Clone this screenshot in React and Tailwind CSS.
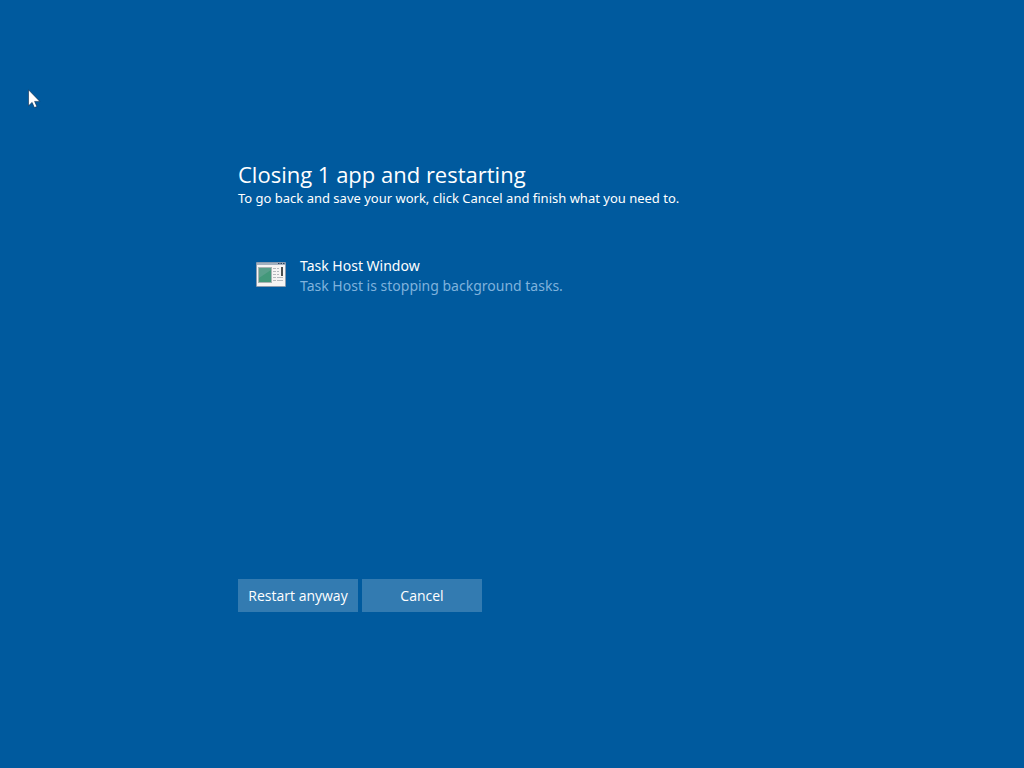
import React from "react";

const apps = [
  {
    id: 1,
    name: "Task Host Window",
    status: "Task Host is stopping background tasks.",
  },
];

function AppIcon() {
  return (
    <svg width="30" height="26" viewBox="0 0 30 26" className="shrink-0" aria-hidden="true">
      <rect x="0" y="0" width="30" height="25" rx="1" fill="#8b9cb0" />
      <rect x="1" y="1" width="28" height="2" fill="#a3b1c0" />
      <path d="M22 1.5h1.5M24.5 1.5h1.5M27 1.5h1.5" stroke="#2b3f5a" />
      <rect x="1" y="3" width="28" height="21" fill="#f6f4f3" />
      <rect x="2" y="5" width="14" height="16" fill="#a9b4b4" />
      <rect x="3" y="6" width="12" height="14" fill="#43987a" />
      <path d="M3 6h12v2L3 16z" fill="#5a9f8b" />
      <path
        d="M17 6.5h3M21 6.5h2M17 9.5h3M21 9.5h2M17 12.5h3M21 12.5h2M17 15.5h3M21 15.5h6M17 18.5h3M21 18.5h6"
        stroke="#b5b9bd"
      />
      <rect x="25" y="5" width="2" height="9" fill="#4b5052" />
    </svg>
  );
}

function Cursor() {
  return (
    <svg
      width="13"
      height="20"
      viewBox="0 0 13 20"
      className="absolute left-7 top-[89px]"
      aria-hidden="true"
    >
      <path
        d="M.5 .8v16l3.6-3.4 2.3 5.2 2.5-1-2.3-5.2h5.2z"
        fill="#fff"
        stroke="#0d2a4a"
        strokeWidth=".6"
      />
    </svg>
  );
}

function App() {
  return (
    <div className="relative min-h-screen bg-[#005a9e] pt-[159px] pl-[238px] pr-6 text-white font-['Noto_Sans',sans-serif]">
      <Cursor />
      <main>
        <h1 className="text-[22px] leading-[30px] font-['Open_Sans',sans-serif]">
          Closing 1 app and restarting
        </h1>
        <p className="text-[13px] leading-[18px]">
          To go back and save your work, click Cancel and finish what you need to.
        </p>

        <ul className="mt-[49px] h-[323px] pl-[18px]">
          {apps.map((app) => (
            <li key={app.id} className="flex items-start gap-3.5">
              <div className="pt-1.5">
                <AppIcon />
              </div>
              <div className="text-sm leading-5">
                <p>{app.name}</p>
                <p className="text-[#7fb2dc]">{app.status}</p>
              </div>
            </li>
          ))}
        </ul>

        <div className="flex gap-1 font-['Open_Sans',sans-serif]">
          <button type="button" className="h-[33px] w-[120px] bg-[#337bb1] text-sm">
            Restart anyway
          </button>
          <button type="button" className="h-[33px] w-[120px] bg-[#337bb1] text-sm">
            Cancel
          </button>
        </div>
      </main>
    </div>
  );
}

export default App;
